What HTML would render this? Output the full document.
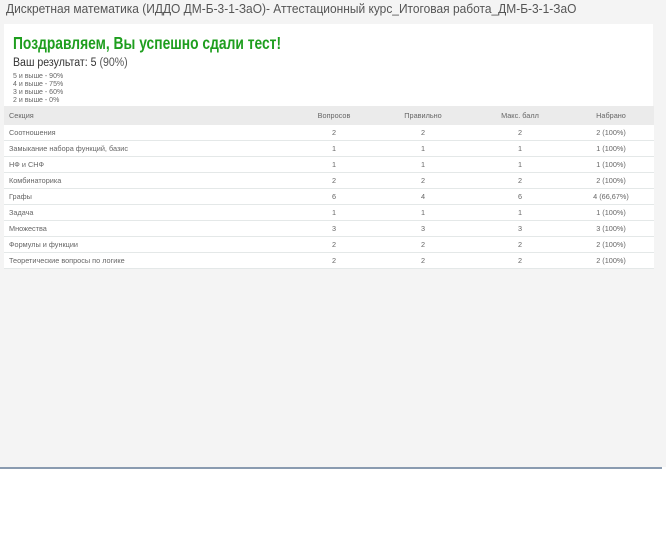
<!DOCTYPE html>
<html><head><meta charset="utf-8">
<style>
html,body{margin:0;padding:0}
body{width:666px;height:533px;background:#fff;font-family:"Liberation Sans",sans-serif;position:relative;overflow:hidden}
#gray{position:absolute;left:0;top:0;width:666px;height:467px;background:#f4f4f4}
#line{position:absolute;left:0;top:467px;width:662px;height:2px;background:#8a9bb0}
h1{position:absolute;left:6px;top:0;margin:0;font-size:13px;font-weight:normal;color:#555;line-height:18px;white-space:nowrap;transform:scaleX(0.92);transform-origin:0 0}
#card{position:absolute;left:4px;top:24px;width:649px;height:82px;background:#fff}
.t{position:absolute;left:9px;top:9px;font-size:17.5px;font-weight:bold;color:#1e9e1e;white-space:nowrap;transform:scaleX(0.79);transform-origin:0 0}
.r{position:absolute;left:9px;top:33px;font-size:11.5px;color:#333;white-space:nowrap;transform:scaleX(0.92);transform-origin:0 0}
.r span{color:#555}
.s{position:absolute;left:9px;top:49px;font-size:7px;line-height:8px;color:#666}
table{position:absolute;left:4px;top:106px;width:650px;border-collapse:collapse;font-size:7.3px;color:#666;background:#fff}
td,th{height:15px;padding:0;border-bottom:1px solid #e4e8e8;font-weight:normal;text-align:center}
th{background:#ebebeb;height:19px;border:none}
td:first-child,th:first-child{text-align:left;padding-left:5px;width:285px}
td:nth-child(2),th:nth-child(2){width:80px}
td:nth-child(3),th:nth-child(3){width:98px}
td:nth-child(4),th:nth-child(4){width:96px}
</style></head><body>
<div id="gray"></div><div id="line"></div>
<h1>Дискретная математика (ИДДО ДМ-Б-3-1-ЗаО)- Аттестационный курс_Итоговая работа_ДМ-Б-3-1-ЗаО</h1>
<div id="card">
<div class="t">Поздравляем, Вы успешно сдали тест!</div>
<div class="r">Ваш результат: 5 <span>(90%)</span></div>
<div class="s">5 и выше - 90%<br>4 и выше - 75%<br>3 и выше - 60%<br>2 и выше - 0%</div>
</div>
<table>
<tr><th>Секция</th><th>Вопросов</th><th>Правильно</th><th>Макс. балл</th><th>Набрано</th></tr>
<tr><td>Соотношения</td><td>2</td><td>2</td><td>2</td><td>2 (100%)</td></tr>
<tr><td>Замыкание набора функций, базис</td><td>1</td><td>1</td><td>1</td><td>1 (100%)</td></tr>
<tr><td>НФ и СНФ</td><td>1</td><td>1</td><td>1</td><td>1 (100%)</td></tr>
<tr><td>Комбинаторика</td><td>2</td><td>2</td><td>2</td><td>2 (100%)</td></tr>
<tr><td>Графы</td><td>6</td><td>4</td><td>6</td><td>4 (66,67%)</td></tr>
<tr><td>Задача</td><td>1</td><td>1</td><td>1</td><td>1 (100%)</td></tr>
<tr><td>Множества</td><td>3</td><td>3</td><td>3</td><td>3 (100%)</td></tr>
<tr><td>Формулы и функции</td><td>2</td><td>2</td><td>2</td><td>2 (100%)</td></tr>
<tr><td>Теоретические вопросы по логике</td><td>2</td><td>2</td><td>2</td><td>2 (100%)</td></tr>
</table>
</body></html>
